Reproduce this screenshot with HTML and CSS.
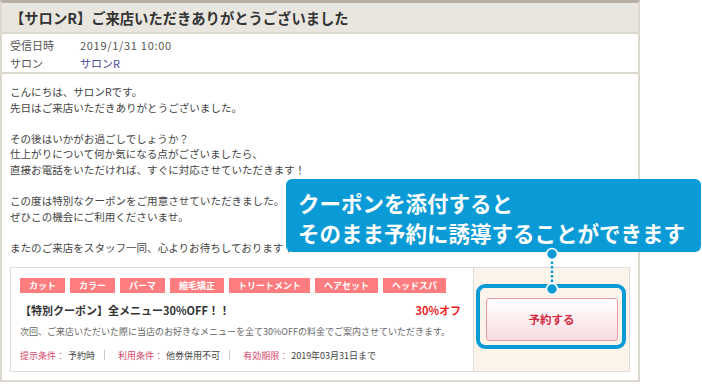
FILE: index.html
```html
<!DOCTYPE html>
<html lang="ja">

<head>
    <meta charset="UTF-8">
    <meta name="viewport" content="width=device-width, initial-scale=1.0">
    <title>サロンR メール</title>
    <link rel="stylesheet" href="styles.css">
</head>

<body>
    <div class="mail">
        <div class="mail-head">【サロンR】ご来店いただきありがとうございました</div>
        <div class="mail-meta">
            <div class="meta-row"><span class="meta-label">受信日時</span><span class="date">2019/1/31 10:00</span></div>
            <div class="meta-row"><span class="meta-label">サロン</span><span class="salon">サロンR</span></div>
        </div>

        <div class="mail-body">
            <p>こんにちは、サロンRです。<br>先日はご来店いただきありがとうございました。</p>
            <p>その後はいかがお過ごしでしょうか？<br>仕上がりについて何か気になる点がございましたら、<br>直接お電話をいただければ、すぐに対応させていただきます！</p>
            <p>この度は特別なクーポンをご用意させていただきました。<br>ぜひこの機会にご利用くださいませ。</p>
            <p>またのご来店をスタッフ一同、心よりお待ちしております！</p>

            <div class="coupon">
                <div class="coupon-main">
                    <ul class="tags">
                        <li>カット</li>
                        <li>カラー</li>
                        <li>パーマ</li>
                        <li>縮毛矯正</li>
                        <li>トリートメント</li>
                        <li>ヘアセット</li>
                        <li>ヘッドスパ</li>
                    </ul>
                    <div class="coupon-title">
                        <span>【特別クーポン】全メニュー30%OFF！！</span>
                        <span class="discount">30%オフ</span>
                    </div>
                    <p class="coupon-desc">次回、ご来店いただいた際に当店のお好きなメニューを全て30%OFFの料金でご案内させていただきます。</p>
                    <p class="coupon-terms">
                        <span class="term-label">提示条件：</span>予約時<span class="sep"></span>
                        <span class="term-label">利用条件：</span>他券併用不可<span class="sep"></span>
                        <span class="term-label">有効期限：</span>2019年03月31日まで
                    </p>
                </div>
                <div class="coupon-side">
                    <a class="reserve-btn">予約する</a>
                    <span class="focus-ring"></span>
                </div>
            </div>
        </div>
    </div>

    <!-- 吹き出し -->
    <div class="callout">クーポンを添付すると<br>そのまま予約に誘導することができます</div>
    <svg class="connector" width="14" height="50" viewBox="0 0 14 50">
        <line x1="7" y1="10" x2="7" y2="40" stroke="#0a9bd6" stroke-width="2.5" stroke-dasharray="2.5 2" />
        <circle cx="7" cy="7" r="5.5" fill="#0a9bd6" stroke="#fff" stroke-width="1.5" />
        <circle cx="7" cy="42" r="5.5" fill="#0a9bd6" stroke="#fff" stroke-width="1.5" />
    </svg>
</body>

</html>
```

FILE: styles.css
```css
body {
    font-family: "Noto Sans CJK JP", "Noto Sans", sans-serif;
    margin: 0;
    background-color: #fff;
    color: #444;
}

.mail {
    width: 640px;
    box-sizing: border-box;
    border-top: 3px solid #b7aea4;
    border-left: 2px solid #dcd8cf;
    border-right: 2px solid #dcd8cf;
    border-bottom: 2px solid #dcd8cf;
}

.mail-head {
    height: 29px;
    line-height: 29px;
    padding-left: 8px;
    background-color: #e9e6df;
    border-bottom: 2px solid #dcd8cf;
    font-size: 14.3px;
    font-weight: bold;
    color: #333;
}

.mail-meta {
    height: 40px;
    box-sizing: border-box;
    padding: 2px 8px;
    border-bottom: 2px solid #dcd8cf;
    font-size: 11px;
    color: #555;
}

.meta-row {
    display: flex;
    line-height: 18px;
}

.meta-label {
    width: 70px;
}

.date {
    letter-spacing: 0.7px;
}

.salon {
    color: #4b4a93;
}

.mail-body {
    padding: 10px 8px 8px;
}

.mail-body > p {
    margin: 0 0 15.6px;
    font-size: 10.55px;
    line-height: 15.6px;
}

.mail-body > p:last-of-type {
    margin-bottom: 11px;
}

.coupon {
    display: flex;
    border: 1px solid #ddd;
    height: 105px;
    box-sizing: border-box;
}

.coupon-main {
    width: 463px;
    box-sizing: border-box;
    padding: 10px 12px 0 9px;
    border-right: 1px solid #ddd;
}

.tags {
    display: flex;
    gap: 5px;
    margin: 0;
    padding: 0;
    list-style: none;
}

.tags li {
    min-width: 26px;
    height: 15px;
    line-height: 15px;
    padding: 0 9px;
    text-align: center;
    background-color: #ff7c7f;
    color: #fff;
    font-size: 9px;
    font-weight: bold;
}

.coupon-title {
    display: flex;
    justify-content: space-between;
    margin-top: 9px;
    line-height: 16px;
    font-size: 11px;
    font-weight: bold;
    color: #333;
}

.discount {
    color: #f01c23;
}

.coupon-desc,
.coupon-terms {
    margin: 6px 0 0;
    line-height: 16px;
    font-size: 9px;
    color: #666;
}

.coupon-terms {
    margin-top: 8px;
    color: #444;
}

.term-label {
    margin-right: 3px;
    color: #d5486a;
}

.sep {
    display: inline-block;
    width: 1px;
    height: 10px;
    margin: 0 11px 0 9px;
    vertical-align: -1px;
    background-color: #ccc;
}

.coupon-side {
    position: relative;
    flex: 1;
    display: flex;
    align-items: center;
    justify-content: center;
    background-color: #fcf4ea;
}

.reserve-btn {
    display: block;
    width: 132px;
    height: 43px;
    box-sizing: border-box;
    line-height: 41px;
    text-align: center;
    border: 1px solid #eb98a2;
    border-radius: 3px;
    background: linear-gradient(#fff, #f8dde1);
    color: #d3283f;
    font-size: 11.5px;
    font-weight: bold;
}

.focus-ring {
    position: absolute;
    top: 16px;
    left: 2px;
    width: 150px;
    height: 65px;
    box-sizing: border-box;
    border: 4px solid #0a9bd6;
    border-radius: 9px;
}

.callout {
    position: absolute;
    top: 179px;
    left: 286px;
    width: 415px;
    height: 73px;
    box-sizing: border-box;
    padding: 9px 12px 0;
    border-radius: 6px;
    background-color: #0a9bd6;
    color: #fff;
    font-size: 21.5px;
    font-weight: bold;
    line-height: 30px;
}

.connector {
    position: absolute;
    top: 247px;
    left: 545px;
}
```
